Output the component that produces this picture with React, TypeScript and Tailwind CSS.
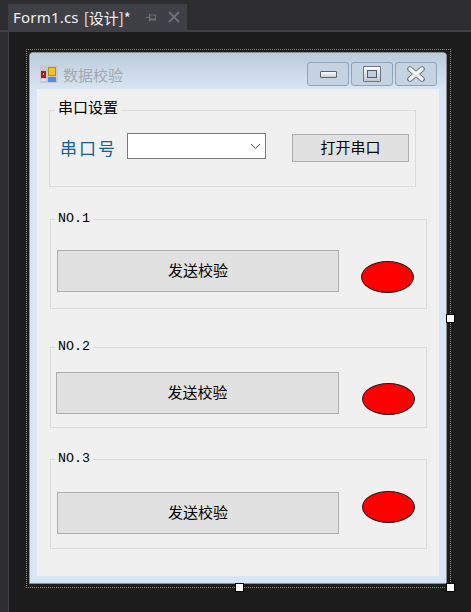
import type { ReactNode } from "react"

const cjk = "font-['Noto_Sans_CJK_SC',sans-serif]"

type GroupProps = {
  title: string
  className: string
  titleClassName: string
  children: ReactNode
}

const Group = ({ title, className, titleClassName, children }: GroupProps) => (
  <div className={`relative shrink-0 border border-[#dcdcdc] ${className}`}>
    <span className={`absolute bg-[#f0f0f0] px-[3px] leading-[20px] text-black ${titleClassName}`}>
      {title}
    </span>
    {children}
  </div>
)

const monoTitle = "-top-[11px] left-[4px] font-['Liberation_Mono',monospace] text-[13.3px]"

const SendButton = ({ className }: { className: string }) => (
  <button
    type="button"
    className={`h-[42px] shrink-0 border border-[#adadad] bg-[#e1e1e1] pb-[2px] text-[15px] text-black ${className}`}
  >
    发送校验
  </button>
)

const Lamp = ({ className }: { className: string }) => (
  <div
    className={`h-[32px] w-[53px] shrink-0 rounded-[50%] border border-[#1c1c1c] bg-[#ff0000] ${className}`}
  />
)

const Handle = ({ className }: { className: string }) => (
  <div
    className={`absolute h-[9px] w-[9px] border border-black bg-white ${className}`}
  />
)

const CaptionButton = ({ children }: { children: ReactNode }) => (
  <button
    type="button"
    className="flex h-[24px] w-[42px] items-center justify-center rounded-[3px] border border-[#8fa3bb] bg-[#c4d2e2]"
  >
    {children}
  </button>
)

const App = () => {
  return (
    <div className={`flex h-[612px] w-[471px] flex-col overflow-hidden bg-[#1c1c1c] ${cjk}`}>
      <div className="flex h-[32px] shrink-0 items-end border-b-2 border-[#3f3f46] bg-[#2d2d30] pl-[8px]">
        <div className="flex h-[26px] w-[179px] items-center bg-[#3f3f46] pl-[5px] text-[15px] text-[#f1f1f1]">
          <span className="font-['Noto_Sans',sans-serif] leading-none tracking-[0.2px]">Form1.cs</span>
          <span className="ml-[5px] leading-none">[设计]*</span>
          <svg className="ml-[15px]" width="11" height="11" viewBox="0 0 11 11" fill="none" stroke="#6f6f76" strokeWidth="1.2">
            <path d="M0 5.5h3M3.5 1.5v8M3.5 3h6v5h-6M4 7h6" />
          </svg>
          <svg className="ml-[11px]" width="12" height="12" viewBox="0 0 12 12" fill="none" stroke="#6f6f76" strokeWidth="1.8">
            <path d="M1 1l10 10M11 1L1 11" />
          </svg>
        </div>
      </div>

      <div className="flex flex-1">
        <div className="w-[9px] shrink-0 border-r border-[#3f3f46] bg-[#2d2d30]" />

        <div className="pl-[17px] pt-[17px]">
          <div className="relative h-[539px] w-[425px] border border-dotted border-[#8a8a8a] p-[2px]">
            <div className="flex h-[532px] w-[418px] flex-col rounded-t-[4px] border border-[#8b8f95] bg-[#d8e5f3]">
              <div className="flex h-[36px] shrink-0 items-center rounded-t-[4px] bg-gradient-to-b from-[#bccbdb] to-[#d8e5f3] pl-[10px] pr-[9px] pt-[6px]">
                <svg width="18" height="18" viewBox="0 0 18 18">
                  <rect width="18" height="18" fill="#c6cacf" />
                  <rect x="1" y="6" width="5" height="7" fill="#a81a14" />
                  <rect x="3" y="8" width="1" height="2" fill="#e8c4b0" />
                  <rect x="1" y="14" width="5" height="2" fill="#dfe2e6" />
                  <rect x="8.5" y="2.5" width="7" height="8" fill="#f5c51f" stroke="#b98a17" />
                  <rect x="8" y="12" width="8" height="5" fill="#4f8ede" />
                </svg>
                <span className="ml-[5px] text-[15px] leading-none text-[#a4a9af]">数据校验</span>
                <div className="ml-auto flex gap-[2px]">
                  <CaptionButton>
                    <div className="h-[7px] w-[17px] rounded-[1px] border border-[#5b6270] bg-gradient-to-b from-white to-[#c9ccd1]" />
                  </CaptionButton>
                  <CaptionButton>
                    <div className="flex h-[16px] w-[18px] items-center justify-center rounded-[1px] border border-[#6b7484] bg-gradient-to-b from-white to-[#c4c7cc]">
                      <div className="h-[8px] w-[10px] border border-[#4f5b6e] bg-[#bfcddc]" />
                    </div>
                  </CaptionButton>
                  <CaptionButton>
                    <svg width="18" height="16" viewBox="0 0 18 16">
                      <path d="M3 3l12 10M15 3L3 13" stroke="#5b6270" strokeWidth="5.4" strokeLinecap="round" />
                      <path d="M3 3l12 10M15 3L3 13" stroke="#f2f3f5" strokeWidth="3.6" strokeLinecap="round" />
                    </svg>
                  </CaptionButton>
                </div>
              </div>

              <div className="mx-[7px] mb-[7px] flex flex-1 flex-col bg-[#f0f0f0]">
                <Group
                  title="串口设置"
                  titleClassName="-top-[14px] left-[5px] text-[15px]"
                  className="ml-[12px] mt-[21px] flex h-[77px] w-[367px] items-start"
                >
                  <span className="ml-[10px] mt-[25px] text-[17px] leading-[24px] tracking-[2px] text-[#17608f]">
                    串口号
                  </span>
                  <div className="ml-[10px] mt-[22px] flex h-[26px] w-[139px] shrink-0 items-center justify-end border border-[#7a7a7a] bg-white pr-[4px]">
                    <svg width="11" height="7" viewBox="0 0 11 7" fill="none" stroke="#555" strokeWidth="1">
                      <path d="M1 1l4.5 4.5L10 1" />
                    </svg>
                  </div>
                  <button
                    type="button"
                    className="ml-[26px] mt-[23px] h-[28px] w-[117px] shrink-0 border border-[#adadad] bg-[#e1e1e1] pb-[2px] text-[15px] text-black"
                  >
                    打开串口
                  </button>
                </Group>

                <Group title="NO.1" titleClassName={monoTitle} className="ml-[13px] mt-[32px] flex h-[90px] w-[377px] items-start">
                  <SendButton className="ml-[6px] mt-[30px] w-[282px]" />
                  <Lamp className="ml-[22px] mt-[41px]" />
                </Group>

                <Group title="NO.2" titleClassName={monoTitle} className="ml-[13px] mt-[38px] flex h-[81px] w-[377px] items-start">
                  <SendButton className="ml-[5px] mt-[24px] w-[283px]" />
                  <Lamp className="ml-[23px] mt-[35px]" />
                </Group>

                <Group title="NO.3" titleClassName={monoTitle} className="ml-[13px] mt-[31px] flex h-[90px] w-[377px] items-start">
                  <SendButton className="ml-[6px] mt-[32px] w-[282px]" />
                  <Lamp className="ml-[23px] mt-[31px]" />
                </Group>
              </div>
            </div>
            <Handle className="-right-[5px] top-[264px]" />
            <Handle className="-bottom-[5px] left-[208px]" />
            <Handle className="-bottom-[5px] -right-[5px]" />
          </div>
        </div>
      </div>
    </div>
  )
}

export default App
